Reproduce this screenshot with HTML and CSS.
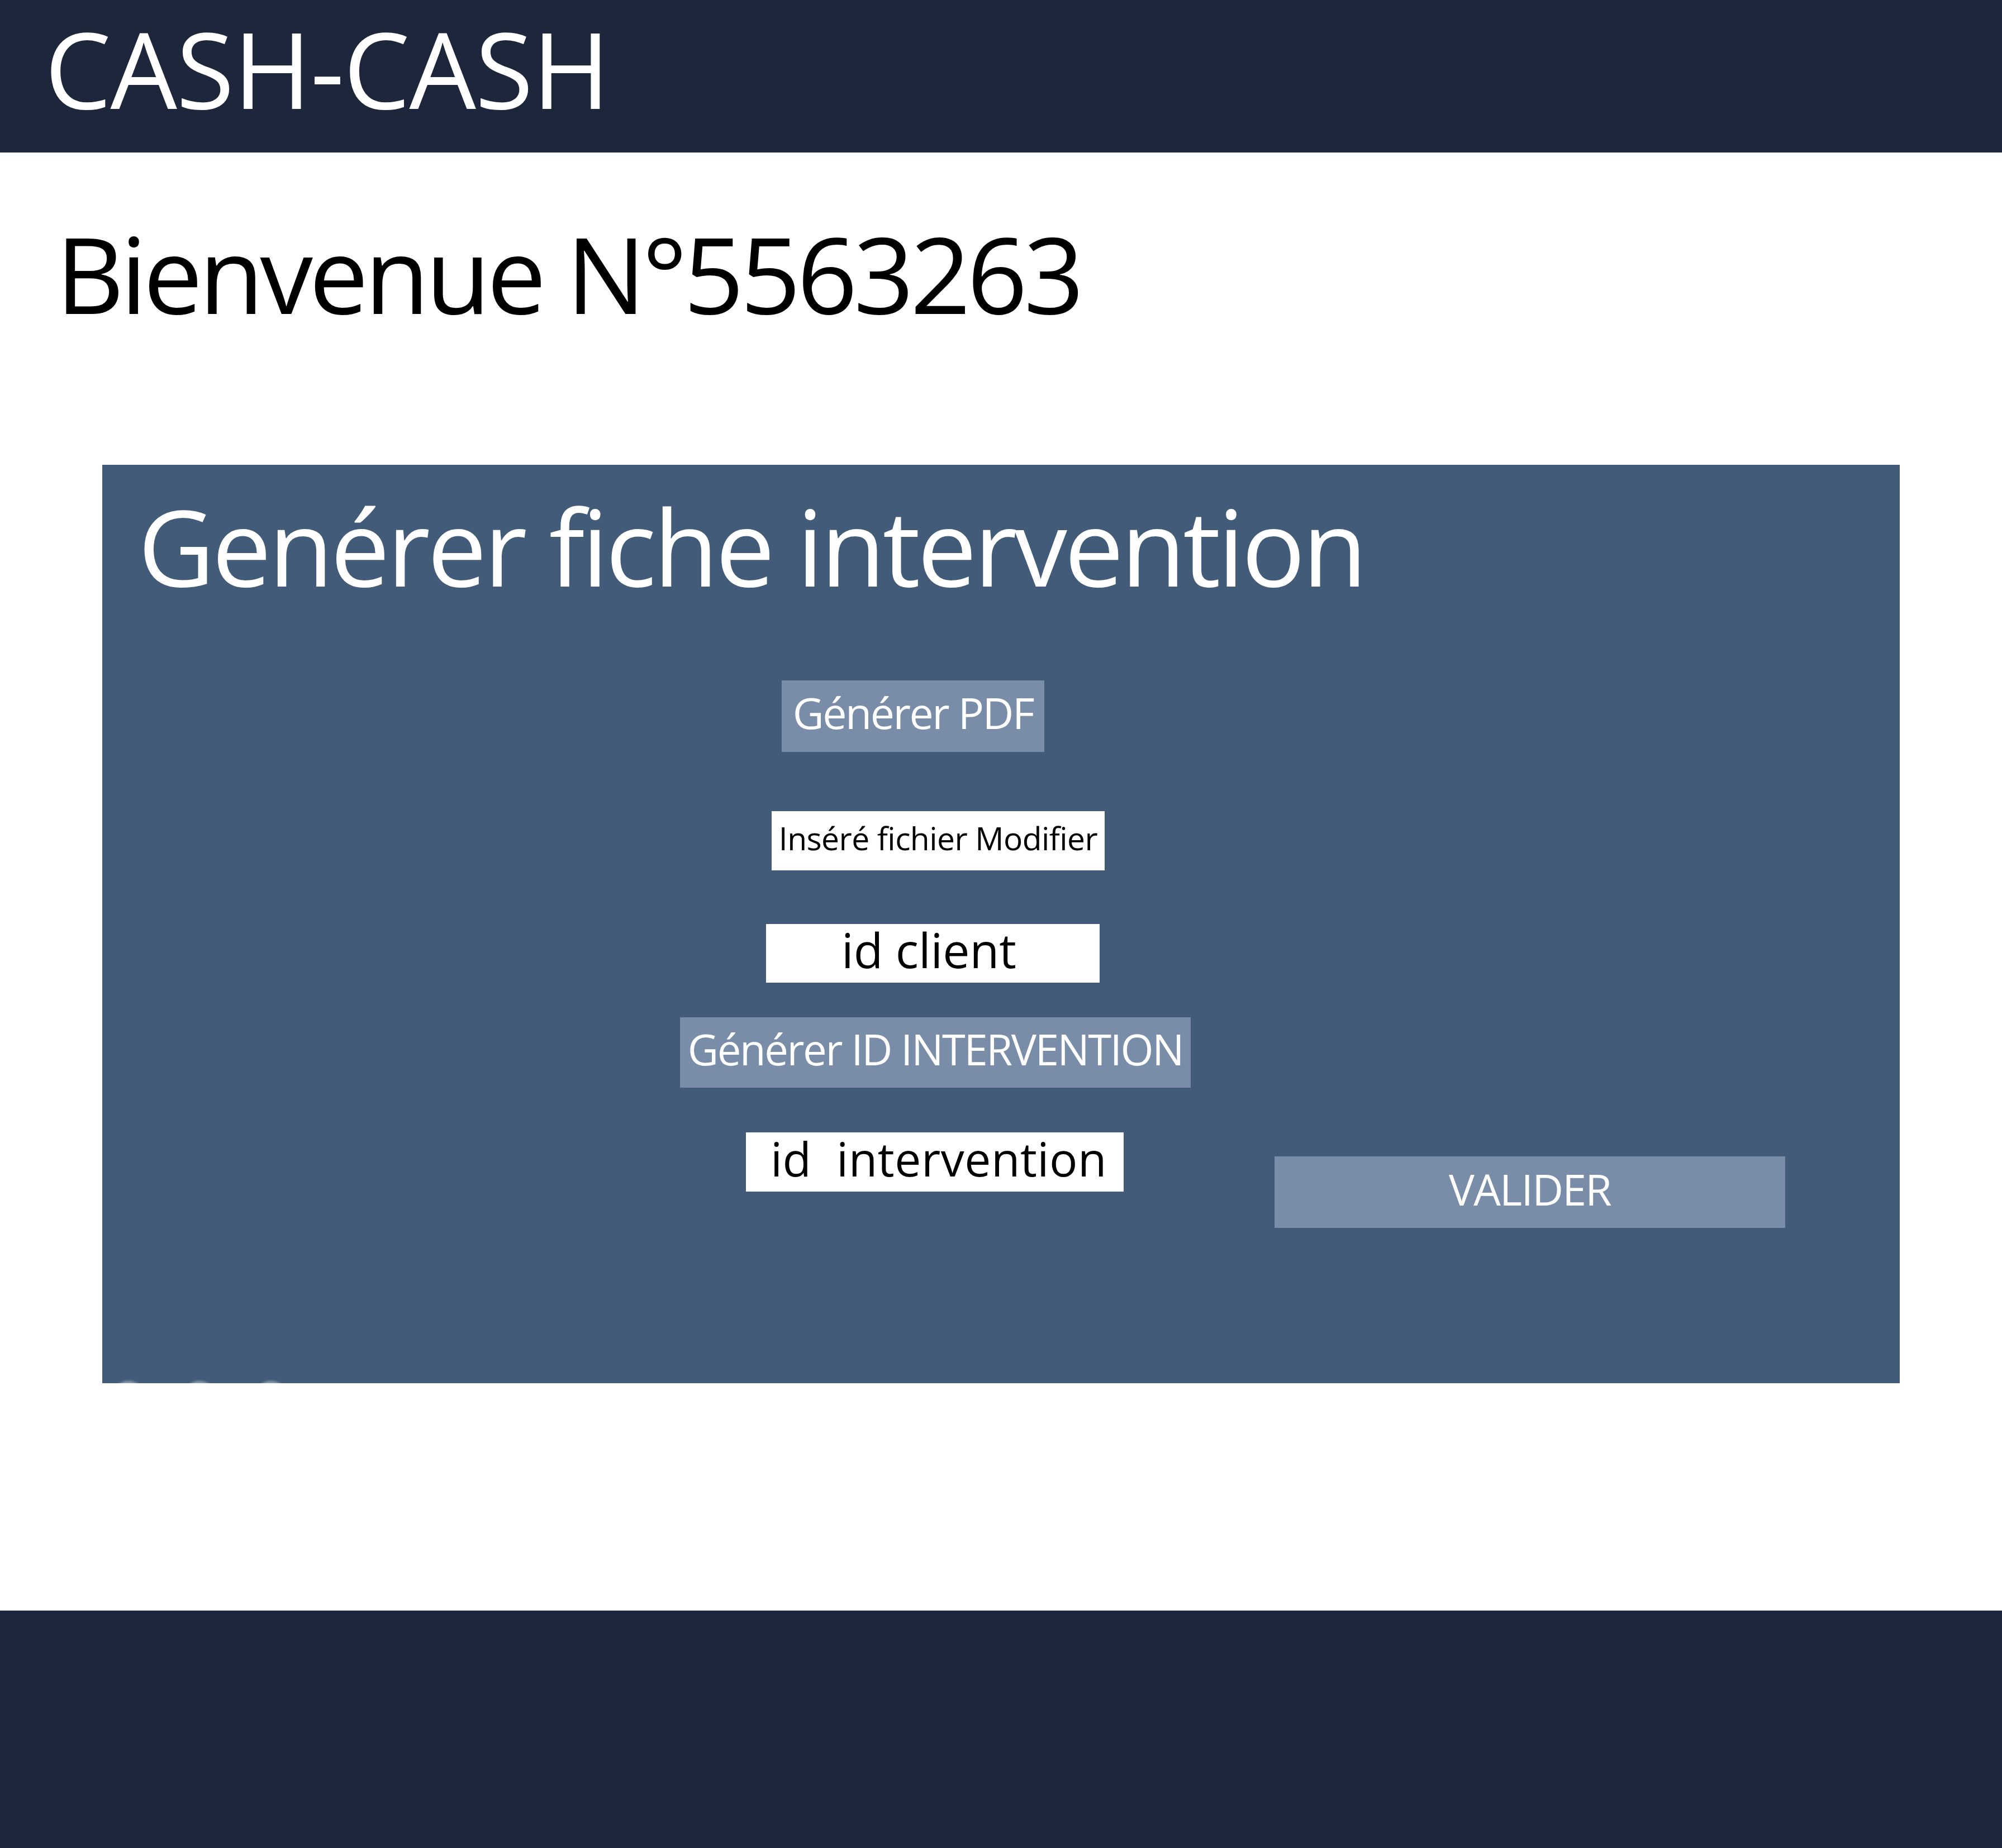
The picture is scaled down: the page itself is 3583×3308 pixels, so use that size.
FILE: index.html
```html
<!DOCTYPE html>
<html lang="fr">
<head>
<meta charset="utf-8">
<title>CASH-CASH</title>
<link rel="stylesheet" href="styles.css">
</head>
<body>
<header class="topbar">
  <div class="brand">CASH-CASH</div>
</header>
<main class="content">
  <h1 class="welcome">Bienvenue N°5563263</h1>
  <section class="panel">
    <h2 class="panel-title">Genérer fiche intervention</h2>
    <div class="panel-body">
      <div class="form-column">
        <button class="btn btn-pdf" type="button">Générer PDF</button>
        <div class="field field-file">Inséré fichier Modifier</div>
        <div class="field field-client">id client</div>
        <button class="btn btn-genid" type="button">Générer ID INTERVENTION</button>
        <div class="field field-interv">id  intervention</div>
      </div>
      <button class="btn btn-validate" type="button">VALIDER</button>
    </div>
    <span class="dot dot-1"></span>
    <span class="dot dot-2"></span>
    <span class="dot dot-3"></span>
  </section>
</main>
<footer class="footer"></footer>
</body>
</html>
```
FILE: styles.css
```css
* { box-sizing: border-box; }

html, body {
  margin: 0;
  padding: 0;
  background: #ffffff;
}

body {
  font-family: "Open Sans", "Noto Sans", sans-serif;
  font-weight: 400;
  color: #000000;
}

.topbar {
  height: 273px;
  background: #1d263b;
  padding: 27px 0 0 80px;
}

.brand {
  color: #ffffff;
  font-size: 189px;
  line-height: 189px;
  letter-spacing: -1.5px;
  white-space: nowrap;
}

.content {
  display: flow-root;
}

.welcome {
  margin: 121px 0 0;
  padding-left: 100px;
  font-size: 189px;
  line-height: 189px;
  font-weight: 400;
  letter-spacing: -6.6px;
  white-space: nowrap;
}

.panel {
  position: relative;
  overflow: hidden;
  margin: 249px 183px 407px;
  height: 1644px;
  background: #425b78;
}

.panel-title {
  margin: 0;
  padding: 50px 0 0 64px;
  color: #ffffff;
  font-size: 189px;
  line-height: 189px;
  font-weight: 400;
  letter-spacing: -4.95px;
  white-space: nowrap;
}

.panel-body {
  display: flex;
  align-items: flex-start;
  margin-top: 147px;
  padding-left: 1034px;
}

.form-column {
  display: flex;
  flex-direction: column;
  align-items: center;
  width: 914px;
}

.btn {
  display: block;
  margin: 0;
  border: 0;
  border-radius: 0;
  background: #798da9;
  color: #ffffff;
  font-family: inherit;
  font-weight: 400;
  text-align: center;
  white-space: nowrap;
  cursor: pointer;
}

.field {
  background: #ffffff;
  color: #000000;
  text-align: center;
  white-space: pre;
}

.btn-pdf {
  width: 470px;
  margin-right: 80px;
  font-size: 77px;
  line-height: 77px;
  padding: 19px 0 32px;
  letter-spacing: -2.5px;
}

.field-file {
  width: 596px;
  margin-top: 106px;
  margin-left: 10px;
  font-size: 57px;
  line-height: 57px;
  padding: 20px 0 29px;
  letter-spacing: -0.6px;
}

.field-client {
  width: 597px;
  margin-top: 96px;
  margin-right: 9px;
  font-size: 86px;
  line-height: 86px;
  padding: 3px 14px 16px 0;
}

.btn-genid {
  width: 914px;
  margin-top: 62px;
  font-size: 76px;
  line-height: 76px;
  padding: 19px 0 31px;
  letter-spacing: -2.4px;
}

.field-interv {
  width: 676px;
  margin-top: 80px;
  margin-right: 2px;
  font-size: 84px;
  line-height: 84px;
  padding: 5px 0 17px 14px;
  letter-spacing: 0.5px;
}

.btn-validate {
  width: 914px;
  margin-left: 150px;
  margin-top: 852px;
  font-size: 77px;
  line-height: 77px;
  padding: 20px 0 31px;
  letter-spacing: -1.8px;
}

.dot {
  position: absolute;
  bottom: -56px;
  width: 60px;
  height: 60px;
  border-radius: 50%;
  background: rgba(205, 215, 228, 0.55);
  filter: blur(2px);
}

.dot-1 { left: 17px; }
.dot-2 { left: 144px; }
.dot-3 { left: 272px; }

.footer {
  height: 425px;
  background: #1d263b;
}
```
